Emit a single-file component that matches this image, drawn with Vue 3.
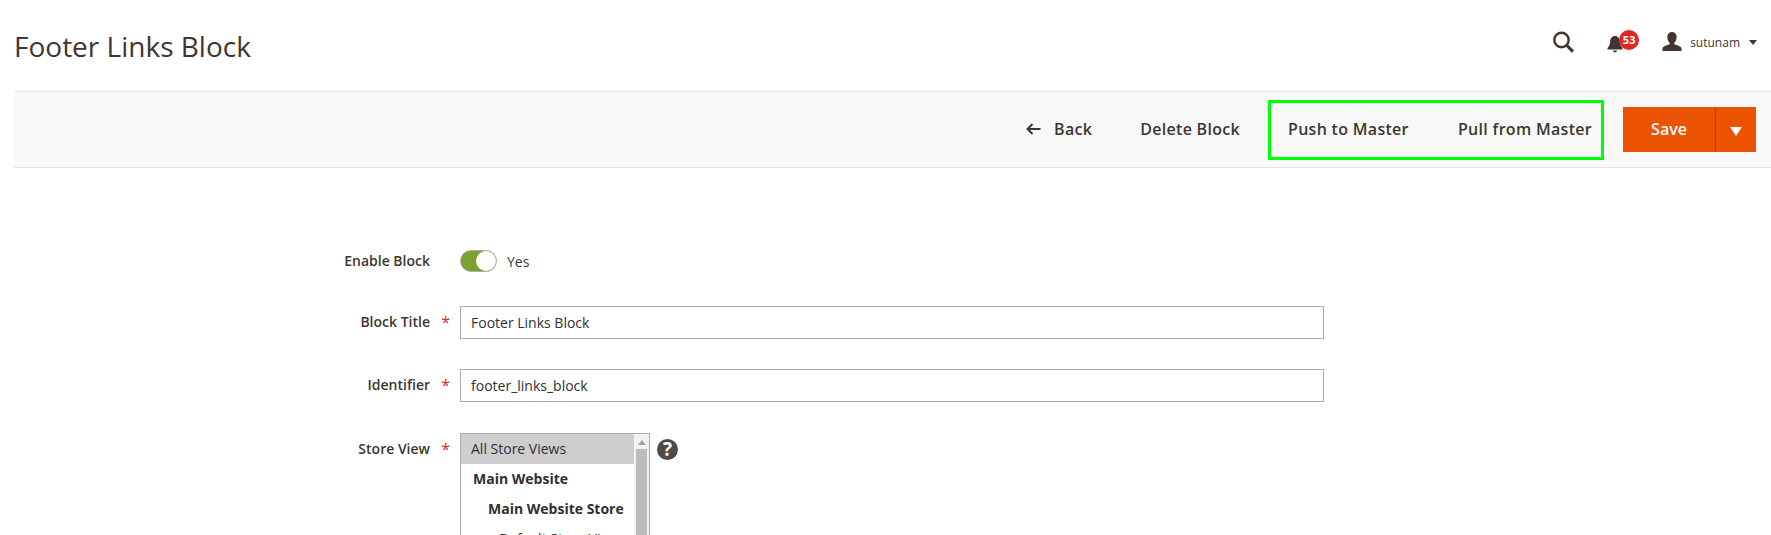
<script setup>
const stores = [
  { name: "All Store Views", level: "selected" },
  { name: "Main Website", level: "group" },
  { name: "Main Website Store", level: "store" },
  { name: "Default Store View", level: "view" },
  { name: "Second Store View", level: "view" }
]
</script>

<template>
  <div class="page">
    <!-- HEADER -->
    <header class="header">
      <h1 class="title">Footer Links Block</h1>
      <div class="tools">
        <svg class="search" width="24" height="24" viewBox="0 0 24 24">
          <circle cx="10.500" cy="10" r="7.200" fill="none" stroke="#41362f" stroke-width="2.400" />
          <path d="M15.800 15.400 L22 21.600" stroke="#41362f" stroke-width="3" fill="none" />
        </svg>
        <div class="bell">
          <svg width="16" height="20" viewBox="0 0 16 20">
            <path d="M8 1c3.200 0 4.600 2.600 4.800 5.400.2 3 1 4.800 2.700 6.600v1.500H.5V13c1.700-1.800 2.500-3.600 2.700-6.600C3.400 3.600 4.800 1 8 1z" fill="#41362f" />
            <path d="M6 15.500h4a2 2 0 0 1-4 0z" fill="#41362f" />
          </svg>
          <span class="badge">53</span>
        </div>
        <div class="user">
          <svg width="20" height="20" viewBox="0 0 20 20">
            <path d="M10 0c3 0 4.600 2.200 4.600 5.200 0 2.400-1 4.600-2.300 5.600v1.400c2.500 1 6.200 1.600 7.200 3.800V19H.5v-3c1-2.200 4.700-2.800 7.200-3.800v-1.400C6.400 9.800 5.400 7.600 5.400 5.200 5.400 2.200 7 0 10 0z" fill="#41362f" />
          </svg>
          <span class="username">sutunam</span>
          <span class="caret"></span>
        </div>
      </div>
    </header>

    <!-- ACTION BAR -->
    <div class="actions">
      <button class="action back">
        <svg width="15" height="12" viewBox="0 0 15 12">
          <path d="M6.500 1 L1.500 6 L6.500 11 M1.500 6 H14.500" fill="none" stroke="#41362f" stroke-width="2" />
        </svg>
        Back
      </button>
      <button class="action delete">Delete Block</button>
      <div class="highlight">
        <button class="action">Push to Master</button>
        <button class="action">Pull from Master</button>
      </div>
      <div class="save">
        <button class="save-main">Save</button>
        <button class="save-toggle"><span class="save-caret"></span></button>
      </div>
    </div>

    <!-- FORM -->
    <form class="form">
      <div class="row row-toggle">
        <label class="label">Enable Block</label>
        <div class="field toggle-field">
          <span class="toggle"><span class="knob"></span></span>
          <span class="toggle-text">Yes</span>
        </div>
      </div>
      <div class="row row-title">
        <label class="label required">Block Title</label>
        <div class="field">
          <input class="input" value="Footer Links Block" />
        </div>
      </div>
      <div class="row">
        <label class="label required">Identifier</label>
        <div class="field">
          <input class="input" value="footer_links_block" />
        </div>
      </div>
      <div class="row row-select">
        <label class="label required">Store View</label>
        <div class="field select-field">
          <div class="select">
            <div class="options">
              <div v-for="s in stores" :key="s.name" class="option" :class="s.level">{{ s.name }}</div>
            </div>
            <div class="scrollbar">
              <span class="scroll-up"></span>
              <span class="scroll-thumb"></span>
            </div>
          </div>
          <span class="help">?</span>
        </div>
      </div>
    </form>
  </div>
</template>

<style scoped>
.page {
  height: 535px;
  overflow: hidden;
  padding-left: 14px;
  font-family: "Open Sans", sans-serif;
  color: #41362f;
  box-sizing: border-box;
}

.header {
  height: 91px;
  display: flex;
  align-items: flex-start;
  justify-content: space-between;
  padding-right: 14px;
  box-sizing: border-box;
}

.title {
  margin: 27px 0 0;
  font-size: 28px;
  line-height: 38px;
  font-weight: 400;
}

.tools {
  display: flex;
  align-items: center;
  margin-top: 30px;
  height: 24px;
}

.search {
  margin-right: 32px;
}

.bell {
  position: relative;
  width: 16px;
  height: 20px;
  margin-right: 39px;
  margin-top: 6px;
}

.badge {
  position: absolute;
  left: 12px;
  top: -5px;
  width: 20px;
  height: 20px;
  border-radius: 50%;
  background: #e22626;
  color: #fff;
  font-size: 11px;
  font-weight: 700;
  line-height: 20px;
  text-align: center;
}

.user {
  display: flex;
  align-items: center;
}

.username {
  margin-left: 8px;
  font-size: 12px;
  color: #41362f;
}

.caret {
  margin-left: 9px;
  border-left: 4.5px solid transparent;
  border-right: 4.5px solid transparent;
  border-top: 5px solid #41362f;
}

.actions {
  height: 77px;
  background: #f8f8f8;
  border-top: 1px solid #e3e3e3;
  border-bottom: 1px solid #e3e3e3;
  box-sizing: border-box;
  display: flex;
  align-items: center;
  justify-content: flex-end;
  padding-right: 15px;
}

button {
  font-family: inherit;
  border: none;
  background: none;
  padding: 0;
}

.action {
  font-size: 16px;
  font-weight: 600;
  color: #41362f;
  line-height: 22px;
  letter-spacing: 0.3px;
  position: relative;
  top: -1px;
}

.back {
  display: flex;
  align-items: center;
  gap: 13px;
  margin-right: 48px;
}

.delete {
  margin-right: 28px;
}

.highlight {
  width: 336px;
  height: 60px;
  border: 3px solid #00ff00;
  box-sizing: border-box;
  display: flex;
  align-items: center;
  justify-content: space-between;
  padding: 0 9px 0 17px;
  margin-right: 19px;
}

.save {
  display: flex;
  height: 45px;
}

.save-main {
  width: 92px;
  background: #eb5202;
  color: #fff;
  font-size: 16px;
  font-weight: 600;
  padding-bottom: 2px;
}

.save-toggle {
  width: 41px;
  background: #eb5202;
  border-left: 1px solid #b84002;
  display: flex;
  align-items: center;
  justify-content: center;
  padding-top: 4px;
  box-sizing: border-box;
}

.save-caret {
  border-left: 6px solid transparent;
  border-right: 6px solid transparent;
  border-top: 9px solid #fff;
}

.form {
  padding-top: 82px;
}

.row {
  display: flex;
  align-items: flex-start;
  margin-bottom: 31px;
}

.row-toggle {
  margin-bottom: 34px;
}

.row-title {
  margin-bottom: 30px;
}

.label {
  width: 446px;
  flex: none;
  text-align: right;
  font-size: 14px;
  font-weight: 600;
  line-height: 32px;
  color: #41362f;
  padding-right: 30px;
  box-sizing: border-box;
  position: relative;
}

.label.required::after {
  content: "*";
  position: absolute;
  right: 10px;
  top: 0;
  color: #e22626;
  font-size: 16px;
  font-weight: 400;
}

.field {
  flex: none;
  width: 864px;
}

.toggle-field {
  display: flex;
  align-items: center;
  height: 22px;
  gap: 10px;
}

.row-toggle .label {
  line-height: 22px;
}

.toggle {
  width: 37px;
  height: 22px;
  border-radius: 11px;
  background: #79a22e;
  border: 1px solid #adadad;
  box-sizing: border-box;
  display: flex;
  justify-content: flex-end;
}

.knob {
  width: 20px;
  height: 20px;
  border-radius: 50%;
  background: #fff;
}

.toggle-text {
  font-size: 14px;
  color: #41362f;
}

.input {
  width: 100%;
  height: 33px;
  border: 1px solid #adadad;
  padding: 0 10px;
  box-sizing: border-box;
  font-family: inherit;
  font-size: 14px;
  color: #303030;
  background: #fff;
  display: block;
  outline: none;
}

.select-field {
  display: flex;
  align-items: flex-start;
  gap: 7px;
}

.select {
  width: 190px;
  height: 160px;
  border: 1px solid #adadad;
  box-sizing: border-box;
  display: flex;
  overflow: hidden;
  flex: none;
}

.options {
  flex: 1;
  min-width: 0;
}

.option {
  height: 30px;
  line-height: 30px;
  font-size: 14px;
  color: #303030;
  white-space: nowrap;
}

.selected {
  background: #cecece;
  padding-left: 10px;
}

.group {
  padding-left: 12px;
  font-weight: 700;
}

.store {
  padding-left: 27px;
  font-weight: 700;
}

.view {
  padding-left: 38px;
}

.scrollbar {
  width: 15px;
  flex: none;
  background: #f1f1f1;
  display: flex;
  flex-direction: column;
  align-items: center;
}

.scroll-up {
  margin-top: 6px;
  border-left: 4px solid transparent;
  border-right: 4px solid transparent;
  border-bottom: 5px solid #a3a3a3;
}

.scroll-thumb {
  margin-top: 4px;
  width: 11px;
  flex: 1;
  background: #bcbcbc;
}

.help {
  margin-top: 6px;
  width: 21px;
  height: 21px;
  border-radius: 50%;
  background: #514943;
  color: #fff;
  font-size: 19px;
  font-weight: 700;
  line-height: 21px;
  text-align: center;
}
</style>

<style>
html, body {
  margin: 0;
  background: #fff;
  overflow: hidden;
}
</style>
